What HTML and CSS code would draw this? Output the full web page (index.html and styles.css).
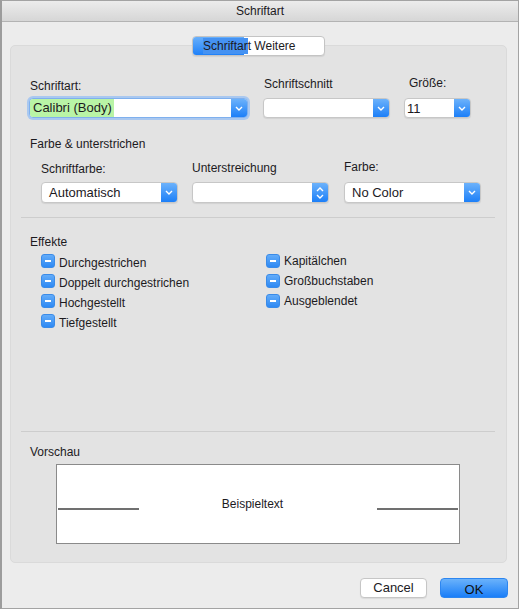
FILE: index.html
```html
<!DOCTYPE html>
<html lang="de">
<head>
<meta charset="utf-8">
<title>Schriftart</title>
<link rel="stylesheet" href="styles.css">
</head>
<body>
<div class="window">
  <div class="titlebar">Schriftart</div>
  <div class="content">
    <div class="tabs">
      <div class="tab-active"></div>
      <span class="tab-label"><span class="tab-sel">Schriftar</span>t Weitere</span>
    </div>
    <div class="panel">
      <div class="row row1">
        <div class="field f1">
          <div class="label">Schriftart:</div>
          <div class="select focus">
            <div class="val"><span class="hl">Calibri (Body)</span></div>
            <div class="btn"><svg width="8" height="5" viewBox="0 0 8 5"><polyline points="1,1 4,4 7,1" fill="none" stroke="#fff" stroke-width="1.4"/></svg></div>
          </div>
        </div>
        <div class="field f2">
          <div class="label">Schriftschnitt</div>
          <div class="select">
            <div class="val"></div>
            <div class="btn"><svg width="8" height="5" viewBox="0 0 8 5"><polyline points="1,1 4,4 7,1" fill="none" stroke="#fff" stroke-width="1.4"/></svg></div>
          </div>
        </div>
        <div class="field f3">
          <div class="label">Größe:</div>
          <div class="select">
            <div class="val small">11</div>
            <div class="btn"><svg width="8" height="5" viewBox="0 0 8 5"><polyline points="1,1 4,4 7,1" fill="none" stroke="#fff" stroke-width="1.4"/></svg></div>
          </div>
        </div>
      </div>

      <div class="heading h-farbe">Farbe &amp; unterstrichen</div>

      <div class="row row2">
        <div class="field g1">
          <div class="label">Schriftfarbe:</div>
          <div class="select">
            <div class="val">Automatisch</div>
            <div class="btn"><svg width="8" height="5" viewBox="0 0 8 5"><polyline points="1,1 4,4 7,1" fill="none" stroke="#fff" stroke-width="1.4"/></svg></div>
          </div>
        </div>
        <div class="field g2">
          <div class="label">Unterstreichung</div>
          <div class="select">
            <div class="val"></div>
            <div class="btn"><svg width="8" height="12" viewBox="0 0 8 12"><polyline points="1,4 4,1 7,4" fill="none" stroke="#fff" stroke-width="1.4"/><polyline points="1,8 4,11 7,8" fill="none" stroke="#fff" stroke-width="1.4"/></svg></div>
          </div>
        </div>
        <div class="field g3">
          <div class="label">Farbe:</div>
          <div class="select">
            <div class="val">No Color</div>
            <div class="btn"><svg width="8" height="5" viewBox="0 0 8 5"><polyline points="1,1 4,4 7,1" fill="none" stroke="#fff" stroke-width="1.4"/></svg></div>
          </div>
        </div>
      </div>

      <div class="sep sep1"></div>

      <div class="heading h-effekte">Effekte</div>

      <div class="checks">
        <div class="col col1">
          <div class="check"><span class="box"></span><span class="ctext">Durchgestrichen</span></div>
          <div class="check"><span class="box"></span><span class="ctext">Doppelt durchgestrichen</span></div>
          <div class="check"><span class="box"></span><span class="ctext">Hochgestellt</span></div>
          <div class="check"><span class="box"></span><span class="ctext">Tiefgestellt</span></div>
        </div>
        <div class="col col2">
          <div class="check"><span class="box"></span><span class="ctext">Kapitälchen</span></div>
          <div class="check"><span class="box"></span><span class="ctext">Großbuchstaben</span></div>
          <div class="check"><span class="box"></span><span class="ctext">Ausgeblendet</span></div>
        </div>
      </div>

      <div class="sep sep2"></div>

      <div class="heading h-vorschau">Vorschau</div>

      <div class="preview">
        <span class="pline"></span>
        <span class="ptext">Beispieltext</span>
        <span class="pline"></span>
      </div>
    </div>

    <div class="buttons">
      <div class="button cancel">Cancel</div>
      <div class="button ok">OK</div>
    </div>
  </div>
</div>
</body>
</html>
```

FILE: styles.css
```css
html, body {
  margin: 0;
  padding: 0;
  background: #ffffff;
}

body {
  font-family: "Liberation Sans", Arial, sans-serif;
  font-size: 12px;
  color: #1c1a1e;
}

.window {
  width: 519px;
  height: 609px;
  box-sizing: border-box;
  border: 1px solid #a3a3a3;
  border-left: 2px solid #9c9c9c;
  background: #ececec;
  overflow: hidden;
}

.titlebar {
  height: 20px;
  line-height: 21px;
  text-align: center;
  background: linear-gradient(#ececec, #d6d6d6);
  border-bottom: 1px solid #b3b3b3;
  font-size: 12px;
  color: #1c1a1e;
}

.content {
  padding-top: 14px;
}

/* Segmented tab control */
.tabs {
  position: relative;
  z-index: 1;
  width: 131px;
  height: 18px;
  margin-left: 190px;
  background: #ffffff;
  border: 1px solid #c4c4c4;
  border-radius: 4px;
  box-shadow: 0 1px 1px rgba(0, 0, 0, 0.08);
  overflow: hidden;
  display: flex;
  align-items: center;
}

.tab-active {
  position: absolute;
  left: 0;
  top: 0;
  bottom: 0;
  width: 51px;
  background: linear-gradient(#69b0fb, #1f81f9);
}

.tab-label {
  position: relative;
  margin-left: 10px;
  line-height: 18px;
  white-space: nowrap;
}

.tab-sel {
  background: #4592f2;
  display: inline-block;
  line-height: 16px;
}

/* Panel */
.panel {
  margin-top: -11px;
  margin-left: 8px;
  width: 495px;
  height: 516px;
  border: 1px solid #dadada;
  border-radius: 5px;
  background: #e3e3e3;
  overflow: hidden;
}

.row {
  display: flex;
  align-items: flex-end;
}

.row1 {
  margin-top: 30px;
}

.label {
  line-height: 14px;
  white-space: nowrap;
}

.f1 { margin-left: 18px; width: 219px; }
.f1 .label { margin-left: 1px; margin-bottom: 5px; }
.f2 { margin-left: 15px; width: 127px; }
.f2 .label { margin-left: 1px; margin-bottom: 7px; }
.f3 { margin-left: 14px; width: 67px; }
.f3 .label { margin-left: 5px; margin-bottom: 8px; }

.row1 .select { height: 20px; }

.g1 { margin-left: 30px; width: 137px; }
.g1 .label { margin-bottom: 6px; }
.g2 { margin-left: 14px; width: 137px; }
.g2 .label { margin-bottom: 7px; }
.g3 { margin-left: 15px; width: 137px; }
.g3 .label { margin-bottom: 8px; }

.row2 .select { height: 21px; }

/* Select / popup button */
.select {
  display: flex;
  box-sizing: border-box;
  background: #ffffff;
  border: 1px solid #c7c7c7;
  border-radius: 4px;
  box-shadow: 0 1px 1px rgba(0, 0, 0, 0.08);
  overflow: hidden;
}

.select.focus {
  border-color: #7fb0ee;
  box-shadow: 0 0 0 2px #a9c8f0;
}

.val {
  flex: 1;
  display: flex;
  align-items: center;
  padding-left: 7px;
  font-size: 13px;
  white-space: nowrap;
}

.f1 .val { padding-left: 0; }
.val.small { padding-left: 2px; }

.hl {
  background: #b9f4a6;
  padding: 1px 2px 1px 3px;
  line-height: 16px;
}

.btn {
  width: 16px;
  display: flex;
  align-items: center;
  justify-content: center;
  background: linear-gradient(#6cb2fb, #1c7ff8);
}

.heading {
  line-height: 14px;
  margin-left: 19px;
}

.h-farbe { margin-top: 19px; }
.row2 { margin-top: 9px; }

.sep {
  height: 1px;
  background: #cdcdcd;
  margin-left: 10px;
  margin-right: 11px;
}

.sep1 { margin-top: 14px; }
.h-effekte { margin-top: 17px; }

/* Checkboxes */
.checks {
  display: flex;
  margin-top: 2px;
  margin-left: 30px;
}

.col1 { width: 225px; }

.check {
  height: 20px;
  display: flex;
  align-items: center;
}

.box {
  width: 14px;
  height: 14px;
  box-sizing: border-box;
  border-radius: 3px;
  background: linear-gradient(#63acf9, #2e89f3);
  border: 1px solid #3a8be8;
  position: relative;
  flex: none;
}

.box::after {
  content: "";
  position: absolute;
  left: 3px;
  right: 3px;
  top: 5px;
  height: 2px;
  background: #ffffff;
}

.ctext {
  margin-left: 4px;
  line-height: 14px;
  padding-top: 3px;
  white-space: nowrap;
}

.col2 .ctext { padding-top: 0; }

.sep2 { margin-top: 100px; }
.h-vorschau { margin-top: 13px; }

/* Preview */
.preview {
  margin-top: 5px;
  margin-left: 45px;
  width: 404px;
  height: 80px;
  box-sizing: border-box;
  border: 1px solid #8a8a8a;
  background: #ffffff;
  display: flex;
  align-items: center;
  padding: 0 1px;
}

.pline {
  width: 81px;
  height: 0;
  border-bottom: 2px solid #707070;
  margin-top: 10px;
  flex: none;
}

.ptext {
  flex: 1;
  text-align: center;
  padding-right: 11px;
}

/* Buttons */
.buttons {
  display: flex;
  justify-content: flex-end;
  margin-top: 15px;
  margin-right: 10px;
}

.button {
  height: 20px;
  box-sizing: border-box;
  border-radius: 4px;
  font-size: 13px;
  text-align: center;
}

.cancel {
  width: 67px;
  background: #ffffff;
  border: 1px solid #c6c6c6;
  box-shadow: 0 1px 1px rgba(0, 0, 0, 0.08);
  line-height: 17px;
}

.ok {
  width: 68px;
  margin-left: 13px;
  background: linear-gradient(#6ab2fb, #1a7ef8);
  border: 1px solid #2d86f0;
  line-height: 21px;
  color: #111111;
}
```
